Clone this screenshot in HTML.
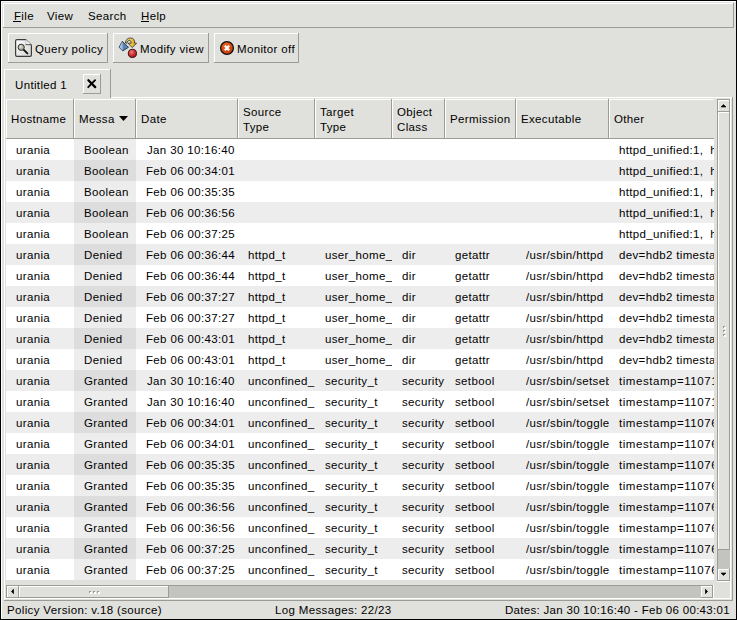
<!DOCTYPE html><html><head><meta charset="utf-8"><style>
html,body{margin:0;padding:0}
body{width:737px;height:620px;position:relative;overflow:hidden;background:#e0e0dc;font-family:"Liberation Sans",sans-serif;font-size:11.5px;letter-spacing:0.35px;color:#000}
.a{position:absolute}
.t{position:absolute;line-height:14px;white-space:nowrap}
</style></head><body>
<div class="a" style="left:0px;top:0px;width:737px;height:620px;background:#000;"></div>
<div class="a" style="left:1px;top:1px;width:735px;height:618px;background:#e0e0dc;"></div>
<div class="a" style="left:1px;top:1px;width:735px;height:1px;background:#ffffff;"></div>
<div class="a" style="left:1px;top:1px;width:1px;height:618px;background:#ffffff;"></div>
<div class="a" style="left:3px;top:3px;width:731px;height:1px;background:#ffffff;"></div>
<div class="a" style="left:3px;top:3px;width:1px;height:25px;background:#ffffff;"></div>
<div class="a" style="left:3px;top:27px;width:731px;height:1px;background:#9c9b94;"></div>
<div class="a" style="left:733px;top:3px;width:1px;height:25px;background:#9c9b94;"></div>
<div class="t" style="left:14px;top:9px;">File</div>
<div class="t" style="left:47px;top:9px;">View</div>
<div class="t" style="left:88px;top:9px;">Search</div>
<div class="t" style="left:141px;top:9px;">Help</div>
<div class="a" style="left:13px;top:21px;width:8px;height:1px;background:#000;"></div>
<div class="a" style="left:141px;top:21px;width:8px;height:1px;background:#000;"></div>
<div class="a" style="left:8px;top:33px;width:100px;height:1px;background:#ffffff;"></div>
<div class="a" style="left:8px;top:33px;width:1px;height:30px;background:#ffffff;"></div>
<div class="a" style="left:8px;top:62px;width:100px;height:1px;background:#9c9b94;"></div>
<div class="a" style="left:107px;top:33px;width:1px;height:30px;background:#9c9b94;"></div>
<div class="a" style="left:113px;top:33px;width:96px;height:1px;background:#ffffff;"></div>
<div class="a" style="left:113px;top:33px;width:1px;height:30px;background:#ffffff;"></div>
<div class="a" style="left:113px;top:62px;width:96px;height:1px;background:#9c9b94;"></div>
<div class="a" style="left:208px;top:33px;width:1px;height:30px;background:#9c9b94;"></div>
<div class="a" style="left:214px;top:33px;width:85px;height:1px;background:#ffffff;"></div>
<div class="a" style="left:214px;top:33px;width:1px;height:30px;background:#ffffff;"></div>
<div class="a" style="left:214px;top:62px;width:85px;height:1px;background:#9c9b94;"></div>
<div class="a" style="left:298px;top:33px;width:1px;height:30px;background:#9c9b94;"></div>
<div class="t" style="left:35px;top:42px;">Query policy</div>
<div class="t" style="left:140px;top:42px;">Modify view</div>
<div class="t" style="left:237px;top:42px;">Monitor off</div>
<div class="a" style="left:4px;top:69px;width:1px;height:532px;background:#ffffff;"></div>
<div class="a" style="left:4px;top:69px;width:107px;height:1px;background:#ffffff;"></div>
<div class="a" style="left:110px;top:69px;width:1px;height:29px;background:#9c9b94;"></div>
<div class="a" style="left:111px;top:97px;width:622px;height:1px;background:#ffffff;"></div>
<div class="a" style="left:732px;top:97px;width:1px;height:504px;background:#9c9b94;"></div>
<div class="a" style="left:4px;top:600px;width:729px;height:1px;background:#9c9b94;"></div>
<div class="t" style="left:15px;top:78px;">Untitled 1</div>
<div class="a" style="left:83px;top:74px;width:18px;height:1px;background:#ffffff;"></div>
<div class="a" style="left:83px;top:74px;width:1px;height:20px;background:#ffffff;"></div>
<div class="a" style="left:83px;top:93px;width:18px;height:1px;background:#9c9b94;"></div>
<div class="a" style="left:100px;top:74px;width:1px;height:20px;background:#9c9b94;"></div>
<div class="a" style="left:730px;top:98px;width:1px;height:501px;background:#ffffff;"></div>
<div class="a" style="left:5px;top:598px;width:726px;height:1px;background:#ffffff;"></div>
<div class="a" style="left:6px;top:99px;width:68px;height:1px;background:#ffffff;"></div>
<div class="a" style="left:6px;top:99px;width:1px;height:40px;background:#ffffff;"></div>
<div class="a" style="left:6px;top:138px;width:68px;height:1px;background:#9c9b94;"></div>
<div class="a" style="left:73px;top:99px;width:1px;height:40px;background:#9c9b94;"></div>
<div class="t" style="left:11px;top:112px;">Hostname</div>
<div class="a" style="left:74px;top:99px;width:62px;height:1px;background:#ffffff;"></div>
<div class="a" style="left:74px;top:99px;width:1px;height:40px;background:#ffffff;"></div>
<div class="a" style="left:74px;top:138px;width:62px;height:1px;background:#9c9b94;"></div>
<div class="a" style="left:135px;top:99px;width:1px;height:40px;background:#9c9b94;"></div>
<div class="t" style="left:79px;top:112px;">Messa</div>
<div class="a" style="left:136px;top:99px;width:102px;height:1px;background:#ffffff;"></div>
<div class="a" style="left:136px;top:99px;width:1px;height:40px;background:#ffffff;"></div>
<div class="a" style="left:136px;top:138px;width:102px;height:1px;background:#9c9b94;"></div>
<div class="a" style="left:237px;top:99px;width:1px;height:40px;background:#9c9b94;"></div>
<div class="t" style="left:141px;top:112px;">Date</div>
<div class="a" style="left:238px;top:99px;width:77px;height:1px;background:#ffffff;"></div>
<div class="a" style="left:238px;top:99px;width:1px;height:40px;background:#ffffff;"></div>
<div class="a" style="left:238px;top:138px;width:77px;height:1px;background:#9c9b94;"></div>
<div class="a" style="left:314px;top:99px;width:1px;height:40px;background:#9c9b94;"></div>
<div class="t" style="left:243px;top:105px;">Source</div>
<div class="t" style="left:243px;top:120px;">Type</div>
<div class="a" style="left:315px;top:99px;width:77px;height:1px;background:#ffffff;"></div>
<div class="a" style="left:315px;top:99px;width:1px;height:40px;background:#ffffff;"></div>
<div class="a" style="left:315px;top:138px;width:77px;height:1px;background:#9c9b94;"></div>
<div class="a" style="left:391px;top:99px;width:1px;height:40px;background:#9c9b94;"></div>
<div class="t" style="left:320px;top:105px;">Target</div>
<div class="t" style="left:320px;top:120px;">Type</div>
<div class="a" style="left:392px;top:99px;width:53px;height:1px;background:#ffffff;"></div>
<div class="a" style="left:392px;top:99px;width:1px;height:40px;background:#ffffff;"></div>
<div class="a" style="left:392px;top:138px;width:53px;height:1px;background:#9c9b94;"></div>
<div class="a" style="left:444px;top:99px;width:1px;height:40px;background:#9c9b94;"></div>
<div class="t" style="left:397px;top:105px;">Object</div>
<div class="t" style="left:397px;top:120px;">Class</div>
<div class="a" style="left:445px;top:99px;width:71px;height:1px;background:#ffffff;"></div>
<div class="a" style="left:445px;top:99px;width:1px;height:40px;background:#ffffff;"></div>
<div class="a" style="left:445px;top:138px;width:71px;height:1px;background:#9c9b94;"></div>
<div class="a" style="left:515px;top:99px;width:1px;height:40px;background:#9c9b94;"></div>
<div class="t" style="left:450px;top:112px;">Permission</div>
<div class="a" style="left:516px;top:99px;width:93px;height:1px;background:#ffffff;"></div>
<div class="a" style="left:516px;top:99px;width:1px;height:40px;background:#ffffff;"></div>
<div class="a" style="left:516px;top:138px;width:93px;height:1px;background:#9c9b94;"></div>
<div class="a" style="left:608px;top:99px;width:1px;height:40px;background:#9c9b94;"></div>
<div class="t" style="left:521px;top:112px;">Executable</div>
<div class="a" style="left:609px;top:99px;width:105px;height:1px;background:#ffffff;"></div>
<div class="a" style="left:609px;top:99px;width:1px;height:40px;background:#ffffff;"></div>
<div class="a" style="left:609px;top:138px;width:105px;height:1px;background:#9c9b94;"></div>
<div class="t" style="left:614px;top:112px;">Other</div>
<svg class="a" style="left:118px;top:115px" width="12" height="8"><polygon points="1,1 10,1 5.5,6" fill="#000"/></svg>
<div class="a" style="left:6px;top:139px;width:708px;height:21px;background:#ffffff;"></div>
<div class="a" style="left:74px;top:139px;width:62px;height:21px;background:#ededed;"></div>
<div class="t" style="left:16px;top:143px;width:58px;overflow:hidden">urania</div>
<div class="t" style="left:84px;top:143px;width:52px;overflow:hidden">Boolean</div>
<div class="t" style="left:147px;top:143px;width:91px;overflow:hidden">Jan 30 10:16:40</div>
<div class="t" style="left:619px;top:143px;width:95px;overflow:hidden">httpd_unified:1,&nbsp; httpd_builtin_scripting:1</div>
<div class="a" style="left:6px;top:160px;width:708px;height:21px;background:#ededed;"></div>
<div class="a" style="left:74px;top:160px;width:62px;height:21px;background:#dddddd;"></div>
<div class="t" style="left:16px;top:164px;width:58px;overflow:hidden">urania</div>
<div class="t" style="left:84px;top:164px;width:52px;overflow:hidden">Boolean</div>
<div class="t" style="left:146px;top:164px;width:92px;overflow:hidden">Feb 06 00:34:01</div>
<div class="t" style="left:619px;top:164px;width:95px;overflow:hidden">httpd_unified:1,&nbsp; httpd_builtin_scripting:1</div>
<div class="a" style="left:6px;top:181px;width:708px;height:21px;background:#ffffff;"></div>
<div class="a" style="left:74px;top:181px;width:62px;height:21px;background:#ededed;"></div>
<div class="t" style="left:16px;top:185px;width:58px;overflow:hidden">urania</div>
<div class="t" style="left:84px;top:185px;width:52px;overflow:hidden">Boolean</div>
<div class="t" style="left:146px;top:185px;width:92px;overflow:hidden">Feb 06 00:35:35</div>
<div class="t" style="left:619px;top:185px;width:95px;overflow:hidden">httpd_unified:1,&nbsp; httpd_builtin_scripting:1</div>
<div class="a" style="left:6px;top:202px;width:708px;height:21px;background:#ededed;"></div>
<div class="a" style="left:74px;top:202px;width:62px;height:21px;background:#dddddd;"></div>
<div class="t" style="left:16px;top:206px;width:58px;overflow:hidden">urania</div>
<div class="t" style="left:84px;top:206px;width:52px;overflow:hidden">Boolean</div>
<div class="t" style="left:146px;top:206px;width:92px;overflow:hidden">Feb 06 00:36:56</div>
<div class="t" style="left:619px;top:206px;width:95px;overflow:hidden">httpd_unified:1,&nbsp; httpd_builtin_scripting:1</div>
<div class="a" style="left:6px;top:223px;width:708px;height:21px;background:#ffffff;"></div>
<div class="a" style="left:74px;top:223px;width:62px;height:21px;background:#ededed;"></div>
<div class="t" style="left:16px;top:227px;width:58px;overflow:hidden">urania</div>
<div class="t" style="left:84px;top:227px;width:52px;overflow:hidden">Boolean</div>
<div class="t" style="left:146px;top:227px;width:92px;overflow:hidden">Feb 06 00:37:25</div>
<div class="t" style="left:619px;top:227px;width:95px;overflow:hidden">httpd_unified:1,&nbsp; httpd_builtin_scripting:1</div>
<div class="a" style="left:6px;top:244px;width:708px;height:21px;background:#ededed;"></div>
<div class="a" style="left:74px;top:244px;width:62px;height:21px;background:#dddddd;"></div>
<div class="t" style="left:16px;top:248px;width:58px;overflow:hidden">urania</div>
<div class="t" style="left:84px;top:248px;width:52px;overflow:hidden">Denied</div>
<div class="t" style="left:146px;top:248px;width:92px;overflow:hidden">Feb 06 00:36:44</div>
<div class="t" style="left:248px;top:248px;width:67px;overflow:hidden">httpd_t</div>
<div class="t" style="left:325px;top:248px;width:67px;overflow:hidden">user_home_</div>
<div class="t" style="left:402px;top:248px;width:43px;overflow:hidden">dir</div>
<div class="t" style="left:455px;top:248px;width:61px;overflow:hidden">getattr</div>
<div class="t" style="left:526px;top:248px;width:83px;overflow:hidden">/usr/sbin/httpd</div>
<div class="t" style="left:619px;top:248px;width:95px;overflow:hidden">dev=hdb2 timestamp=1107</div>
<div class="a" style="left:6px;top:265px;width:708px;height:21px;background:#ffffff;"></div>
<div class="a" style="left:74px;top:265px;width:62px;height:21px;background:#ededed;"></div>
<div class="t" style="left:16px;top:269px;width:58px;overflow:hidden">urania</div>
<div class="t" style="left:84px;top:269px;width:52px;overflow:hidden">Denied</div>
<div class="t" style="left:146px;top:269px;width:92px;overflow:hidden">Feb 06 00:36:44</div>
<div class="t" style="left:248px;top:269px;width:67px;overflow:hidden">httpd_t</div>
<div class="t" style="left:325px;top:269px;width:67px;overflow:hidden">user_home_</div>
<div class="t" style="left:402px;top:269px;width:43px;overflow:hidden">dir</div>
<div class="t" style="left:455px;top:269px;width:61px;overflow:hidden">getattr</div>
<div class="t" style="left:526px;top:269px;width:83px;overflow:hidden">/usr/sbin/httpd</div>
<div class="t" style="left:619px;top:269px;width:95px;overflow:hidden">dev=hdb2 timestamp=1107</div>
<div class="a" style="left:6px;top:286px;width:708px;height:21px;background:#ededed;"></div>
<div class="a" style="left:74px;top:286px;width:62px;height:21px;background:#dddddd;"></div>
<div class="t" style="left:16px;top:290px;width:58px;overflow:hidden">urania</div>
<div class="t" style="left:84px;top:290px;width:52px;overflow:hidden">Denied</div>
<div class="t" style="left:146px;top:290px;width:92px;overflow:hidden">Feb 06 00:37:27</div>
<div class="t" style="left:248px;top:290px;width:67px;overflow:hidden">httpd_t</div>
<div class="t" style="left:325px;top:290px;width:67px;overflow:hidden">user_home_</div>
<div class="t" style="left:402px;top:290px;width:43px;overflow:hidden">dir</div>
<div class="t" style="left:455px;top:290px;width:61px;overflow:hidden">getattr</div>
<div class="t" style="left:526px;top:290px;width:83px;overflow:hidden">/usr/sbin/httpd</div>
<div class="t" style="left:619px;top:290px;width:95px;overflow:hidden">dev=hdb2 timestamp=1107</div>
<div class="a" style="left:6px;top:307px;width:708px;height:21px;background:#ffffff;"></div>
<div class="a" style="left:74px;top:307px;width:62px;height:21px;background:#ededed;"></div>
<div class="t" style="left:16px;top:311px;width:58px;overflow:hidden">urania</div>
<div class="t" style="left:84px;top:311px;width:52px;overflow:hidden">Denied</div>
<div class="t" style="left:146px;top:311px;width:92px;overflow:hidden">Feb 06 00:37:27</div>
<div class="t" style="left:248px;top:311px;width:67px;overflow:hidden">httpd_t</div>
<div class="t" style="left:325px;top:311px;width:67px;overflow:hidden">user_home_</div>
<div class="t" style="left:402px;top:311px;width:43px;overflow:hidden">dir</div>
<div class="t" style="left:455px;top:311px;width:61px;overflow:hidden">getattr</div>
<div class="t" style="left:526px;top:311px;width:83px;overflow:hidden">/usr/sbin/httpd</div>
<div class="t" style="left:619px;top:311px;width:95px;overflow:hidden">dev=hdb2 timestamp=1107</div>
<div class="a" style="left:6px;top:328px;width:708px;height:21px;background:#ededed;"></div>
<div class="a" style="left:74px;top:328px;width:62px;height:21px;background:#dddddd;"></div>
<div class="t" style="left:16px;top:332px;width:58px;overflow:hidden">urania</div>
<div class="t" style="left:84px;top:332px;width:52px;overflow:hidden">Denied</div>
<div class="t" style="left:146px;top:332px;width:92px;overflow:hidden">Feb 06 00:43:01</div>
<div class="t" style="left:248px;top:332px;width:67px;overflow:hidden">httpd_t</div>
<div class="t" style="left:325px;top:332px;width:67px;overflow:hidden">user_home_</div>
<div class="t" style="left:402px;top:332px;width:43px;overflow:hidden">dir</div>
<div class="t" style="left:455px;top:332px;width:61px;overflow:hidden">getattr</div>
<div class="t" style="left:526px;top:332px;width:83px;overflow:hidden">/usr/sbin/httpd</div>
<div class="t" style="left:619px;top:332px;width:95px;overflow:hidden">dev=hdb2 timestamp=1107</div>
<div class="a" style="left:6px;top:349px;width:708px;height:21px;background:#ffffff;"></div>
<div class="a" style="left:74px;top:349px;width:62px;height:21px;background:#ededed;"></div>
<div class="t" style="left:16px;top:353px;width:58px;overflow:hidden">urania</div>
<div class="t" style="left:84px;top:353px;width:52px;overflow:hidden">Denied</div>
<div class="t" style="left:146px;top:353px;width:92px;overflow:hidden">Feb 06 00:43:01</div>
<div class="t" style="left:248px;top:353px;width:67px;overflow:hidden">httpd_t</div>
<div class="t" style="left:325px;top:353px;width:67px;overflow:hidden">user_home_</div>
<div class="t" style="left:402px;top:353px;width:43px;overflow:hidden">dir</div>
<div class="t" style="left:455px;top:353px;width:61px;overflow:hidden">getattr</div>
<div class="t" style="left:526px;top:353px;width:83px;overflow:hidden">/usr/sbin/httpd</div>
<div class="t" style="left:619px;top:353px;width:95px;overflow:hidden">dev=hdb2 timestamp=1107</div>
<div class="a" style="left:6px;top:370px;width:708px;height:21px;background:#ededed;"></div>
<div class="a" style="left:74px;top:370px;width:62px;height:21px;background:#dddddd;"></div>
<div class="t" style="left:16px;top:374px;width:58px;overflow:hidden">urania</div>
<div class="t" style="left:84px;top:374px;width:52px;overflow:hidden">Granted</div>
<div class="t" style="left:147px;top:374px;width:91px;overflow:hidden">Jan 30 10:16:40</div>
<div class="t" style="left:248px;top:374px;width:67px;overflow:hidden">unconfined_</div>
<div class="t" style="left:325px;top:374px;width:67px;overflow:hidden">security_t</div>
<div class="t" style="left:402px;top:374px;width:43px;overflow:hidden">security</div>
<div class="t" style="left:455px;top:374px;width:61px;overflow:hidden">setbool</div>
<div class="t" style="left:526px;top:374px;width:83px;overflow:hidden">/usr/sbin/setsebool</div>
<div class="t" style="left:619px;top:374px;width:95px;overflow:hidden;letter-spacing:0.55px">timestamp=1107115</div>
<div class="a" style="left:6px;top:391px;width:708px;height:21px;background:#ffffff;"></div>
<div class="a" style="left:74px;top:391px;width:62px;height:21px;background:#ededed;"></div>
<div class="t" style="left:16px;top:395px;width:58px;overflow:hidden">urania</div>
<div class="t" style="left:84px;top:395px;width:52px;overflow:hidden">Granted</div>
<div class="t" style="left:147px;top:395px;width:91px;overflow:hidden">Jan 30 10:16:40</div>
<div class="t" style="left:248px;top:395px;width:67px;overflow:hidden">unconfined_</div>
<div class="t" style="left:325px;top:395px;width:67px;overflow:hidden">security_t</div>
<div class="t" style="left:402px;top:395px;width:43px;overflow:hidden">security</div>
<div class="t" style="left:455px;top:395px;width:61px;overflow:hidden">setbool</div>
<div class="t" style="left:526px;top:395px;width:83px;overflow:hidden">/usr/sbin/setsebool</div>
<div class="t" style="left:619px;top:395px;width:95px;overflow:hidden;letter-spacing:0.55px">timestamp=1107115</div>
<div class="a" style="left:6px;top:412px;width:708px;height:21px;background:#ededed;"></div>
<div class="a" style="left:74px;top:412px;width:62px;height:21px;background:#dddddd;"></div>
<div class="t" style="left:16px;top:416px;width:58px;overflow:hidden">urania</div>
<div class="t" style="left:84px;top:416px;width:52px;overflow:hidden">Granted</div>
<div class="t" style="left:146px;top:416px;width:92px;overflow:hidden">Feb 06 00:34:01</div>
<div class="t" style="left:248px;top:416px;width:67px;overflow:hidden">unconfined_</div>
<div class="t" style="left:325px;top:416px;width:67px;overflow:hidden">security_t</div>
<div class="t" style="left:402px;top:416px;width:43px;overflow:hidden">security</div>
<div class="t" style="left:455px;top:416px;width:61px;overflow:hidden">setbool</div>
<div class="t" style="left:526px;top:416px;width:83px;overflow:hidden">/usr/sbin/togglesebool</div>
<div class="t" style="left:619px;top:416px;width:95px;overflow:hidden;letter-spacing:0.55px">timestamp=1107672</div>
<div class="a" style="left:6px;top:433px;width:708px;height:21px;background:#ffffff;"></div>
<div class="a" style="left:74px;top:433px;width:62px;height:21px;background:#ededed;"></div>
<div class="t" style="left:16px;top:437px;width:58px;overflow:hidden">urania</div>
<div class="t" style="left:84px;top:437px;width:52px;overflow:hidden">Granted</div>
<div class="t" style="left:146px;top:437px;width:92px;overflow:hidden">Feb 06 00:34:01</div>
<div class="t" style="left:248px;top:437px;width:67px;overflow:hidden">unconfined_</div>
<div class="t" style="left:325px;top:437px;width:67px;overflow:hidden">security_t</div>
<div class="t" style="left:402px;top:437px;width:43px;overflow:hidden">security</div>
<div class="t" style="left:455px;top:437px;width:61px;overflow:hidden">setbool</div>
<div class="t" style="left:526px;top:437px;width:83px;overflow:hidden">/usr/sbin/togglesebool</div>
<div class="t" style="left:619px;top:437px;width:95px;overflow:hidden;letter-spacing:0.55px">timestamp=1107672</div>
<div class="a" style="left:6px;top:454px;width:708px;height:21px;background:#ededed;"></div>
<div class="a" style="left:74px;top:454px;width:62px;height:21px;background:#dddddd;"></div>
<div class="t" style="left:16px;top:458px;width:58px;overflow:hidden">urania</div>
<div class="t" style="left:84px;top:458px;width:52px;overflow:hidden">Granted</div>
<div class="t" style="left:146px;top:458px;width:92px;overflow:hidden">Feb 06 00:35:35</div>
<div class="t" style="left:248px;top:458px;width:67px;overflow:hidden">unconfined_</div>
<div class="t" style="left:325px;top:458px;width:67px;overflow:hidden">security_t</div>
<div class="t" style="left:402px;top:458px;width:43px;overflow:hidden">security</div>
<div class="t" style="left:455px;top:458px;width:61px;overflow:hidden">setbool</div>
<div class="t" style="left:526px;top:458px;width:83px;overflow:hidden">/usr/sbin/togglesebool</div>
<div class="t" style="left:619px;top:458px;width:95px;overflow:hidden;letter-spacing:0.55px">timestamp=1107672</div>
<div class="a" style="left:6px;top:475px;width:708px;height:21px;background:#ffffff;"></div>
<div class="a" style="left:74px;top:475px;width:62px;height:21px;background:#ededed;"></div>
<div class="t" style="left:16px;top:479px;width:58px;overflow:hidden">urania</div>
<div class="t" style="left:84px;top:479px;width:52px;overflow:hidden">Granted</div>
<div class="t" style="left:146px;top:479px;width:92px;overflow:hidden">Feb 06 00:35:35</div>
<div class="t" style="left:248px;top:479px;width:67px;overflow:hidden">unconfined_</div>
<div class="t" style="left:325px;top:479px;width:67px;overflow:hidden">security_t</div>
<div class="t" style="left:402px;top:479px;width:43px;overflow:hidden">security</div>
<div class="t" style="left:455px;top:479px;width:61px;overflow:hidden">setbool</div>
<div class="t" style="left:526px;top:479px;width:83px;overflow:hidden">/usr/sbin/togglesebool</div>
<div class="t" style="left:619px;top:479px;width:95px;overflow:hidden;letter-spacing:0.55px">timestamp=1107672</div>
<div class="a" style="left:6px;top:496px;width:708px;height:21px;background:#ededed;"></div>
<div class="a" style="left:74px;top:496px;width:62px;height:21px;background:#dddddd;"></div>
<div class="t" style="left:16px;top:500px;width:58px;overflow:hidden">urania</div>
<div class="t" style="left:84px;top:500px;width:52px;overflow:hidden">Granted</div>
<div class="t" style="left:146px;top:500px;width:92px;overflow:hidden">Feb 06 00:36:56</div>
<div class="t" style="left:248px;top:500px;width:67px;overflow:hidden">unconfined_</div>
<div class="t" style="left:325px;top:500px;width:67px;overflow:hidden">security_t</div>
<div class="t" style="left:402px;top:500px;width:43px;overflow:hidden">security</div>
<div class="t" style="left:455px;top:500px;width:61px;overflow:hidden">setbool</div>
<div class="t" style="left:526px;top:500px;width:83px;overflow:hidden">/usr/sbin/togglesebool</div>
<div class="t" style="left:619px;top:500px;width:95px;overflow:hidden;letter-spacing:0.55px">timestamp=1107672</div>
<div class="a" style="left:6px;top:517px;width:708px;height:21px;background:#ffffff;"></div>
<div class="a" style="left:74px;top:517px;width:62px;height:21px;background:#ededed;"></div>
<div class="t" style="left:16px;top:521px;width:58px;overflow:hidden">urania</div>
<div class="t" style="left:84px;top:521px;width:52px;overflow:hidden">Granted</div>
<div class="t" style="left:146px;top:521px;width:92px;overflow:hidden">Feb 06 00:36:56</div>
<div class="t" style="left:248px;top:521px;width:67px;overflow:hidden">unconfined_</div>
<div class="t" style="left:325px;top:521px;width:67px;overflow:hidden">security_t</div>
<div class="t" style="left:402px;top:521px;width:43px;overflow:hidden">security</div>
<div class="t" style="left:455px;top:521px;width:61px;overflow:hidden">setbool</div>
<div class="t" style="left:526px;top:521px;width:83px;overflow:hidden">/usr/sbin/togglesebool</div>
<div class="t" style="left:619px;top:521px;width:95px;overflow:hidden;letter-spacing:0.55px">timestamp=1107672</div>
<div class="a" style="left:6px;top:538px;width:708px;height:21px;background:#ededed;"></div>
<div class="a" style="left:74px;top:538px;width:62px;height:21px;background:#dddddd;"></div>
<div class="t" style="left:16px;top:542px;width:58px;overflow:hidden">urania</div>
<div class="t" style="left:84px;top:542px;width:52px;overflow:hidden">Granted</div>
<div class="t" style="left:146px;top:542px;width:92px;overflow:hidden">Feb 06 00:37:25</div>
<div class="t" style="left:248px;top:542px;width:67px;overflow:hidden">unconfined_</div>
<div class="t" style="left:325px;top:542px;width:67px;overflow:hidden">security_t</div>
<div class="t" style="left:402px;top:542px;width:43px;overflow:hidden">security</div>
<div class="t" style="left:455px;top:542px;width:61px;overflow:hidden">setbool</div>
<div class="t" style="left:526px;top:542px;width:83px;overflow:hidden">/usr/sbin/togglesebool</div>
<div class="t" style="left:619px;top:542px;width:95px;overflow:hidden;letter-spacing:0.55px">timestamp=1107672</div>
<div class="a" style="left:6px;top:559px;width:708px;height:21px;background:#ffffff;"></div>
<div class="a" style="left:74px;top:559px;width:62px;height:21px;background:#ededed;"></div>
<div class="t" style="left:16px;top:563px;width:58px;overflow:hidden">urania</div>
<div class="t" style="left:84px;top:563px;width:52px;overflow:hidden">Granted</div>
<div class="t" style="left:146px;top:563px;width:92px;overflow:hidden">Feb 06 00:37:25</div>
<div class="t" style="left:248px;top:563px;width:67px;overflow:hidden">unconfined_</div>
<div class="t" style="left:325px;top:563px;width:67px;overflow:hidden">security_t</div>
<div class="t" style="left:402px;top:563px;width:43px;overflow:hidden">security</div>
<div class="t" style="left:455px;top:563px;width:61px;overflow:hidden">setbool</div>
<div class="t" style="left:526px;top:563px;width:83px;overflow:hidden">/usr/sbin/togglesebool</div>
<div class="t" style="left:619px;top:563px;width:95px;overflow:hidden;letter-spacing:0.55px">timestamp=1107672</div>
<div class="a" style="left:717px;top:99px;width:14px;height:483px;background:#c3c4bf;"></div>
<div class="a" style="left:717px;top:99px;width:14px;height:1px;background:#9c9b94;"></div>
<div class="a" style="left:717px;top:99px;width:1px;height:483px;background:#9c9b94;"></div>
<div class="a" style="left:717px;top:581px;width:14px;height:1px;background:#ffffff;"></div>
<div class="a" style="left:730px;top:99px;width:1px;height:483px;background:#ffffff;"></div>
<div class="a" style="left:718px;top:100px;width:12px;height:12px;background:#e0e0dc;"></div>
<div class="a" style="left:718px;top:100px;width:12px;height:1px;background:#ffffff;"></div>
<div class="a" style="left:718px;top:100px;width:1px;height:12px;background:#ffffff;"></div>
<div class="a" style="left:718px;top:111px;width:12px;height:1px;background:#9c9b94;"></div>
<div class="a" style="left:729px;top:100px;width:1px;height:12px;background:#9c9b94;"></div>
<div class="a" style="left:718px;top:112px;width:12px;height:438px;background:#e0e0dc;"></div>
<div class="a" style="left:718px;top:112px;width:12px;height:1px;background:#ffffff;"></div>
<div class="a" style="left:718px;top:112px;width:1px;height:438px;background:#ffffff;"></div>
<div class="a" style="left:718px;top:549px;width:12px;height:1px;background:#9c9b94;"></div>
<div class="a" style="left:729px;top:112px;width:1px;height:438px;background:#9c9b94;"></div>
<div class="a" style="left:718px;top:569px;width:12px;height:12px;background:#e0e0dc;"></div>
<div class="a" style="left:718px;top:569px;width:12px;height:1px;background:#ffffff;"></div>
<div class="a" style="left:718px;top:569px;width:1px;height:12px;background:#ffffff;"></div>
<div class="a" style="left:718px;top:580px;width:12px;height:1px;background:#9c9b94;"></div>
<div class="a" style="left:729px;top:569px;width:1px;height:12px;background:#9c9b94;"></div>
<svg class="a" style="left:718px;top:100px" width="12" height="12"><polygon points="3,7 8,7 5.5,4.5" fill="#000" stroke="#000" stroke-width="0.6"/></svg>
<svg class="a" style="left:718px;top:569px" width="12" height="12"><polygon points="3,4 8,4 5.5,6.5" fill="#000" stroke="#000" stroke-width="0.6"/></svg>
<div class="a" style="left:6px;top:585px;width:708px;height:14px;background:#c3c4bf;"></div>
<div class="a" style="left:6px;top:585px;width:708px;height:1px;background:#9c9b94;"></div>
<div class="a" style="left:6px;top:585px;width:1px;height:14px;background:#9c9b94;"></div>
<div class="a" style="left:6px;top:598px;width:708px;height:1px;background:#ffffff;"></div>
<div class="a" style="left:713px;top:585px;width:1px;height:14px;background:#ffffff;"></div>
<div class="a" style="left:7px;top:586px;width:12px;height:12px;background:#e0e0dc;"></div>
<div class="a" style="left:7px;top:586px;width:12px;height:1px;background:#ffffff;"></div>
<div class="a" style="left:7px;top:586px;width:1px;height:12px;background:#ffffff;"></div>
<div class="a" style="left:7px;top:597px;width:12px;height:1px;background:#9c9b94;"></div>
<div class="a" style="left:18px;top:586px;width:1px;height:12px;background:#9c9b94;"></div>
<div class="a" style="left:19px;top:586px;width:150px;height:12px;background:#e0e0dc;"></div>
<div class="a" style="left:19px;top:586px;width:150px;height:1px;background:#ffffff;"></div>
<div class="a" style="left:19px;top:586px;width:1px;height:12px;background:#ffffff;"></div>
<div class="a" style="left:19px;top:597px;width:150px;height:1px;background:#9c9b94;"></div>
<div class="a" style="left:168px;top:586px;width:1px;height:12px;background:#9c9b94;"></div>
<div class="a" style="left:701px;top:586px;width:12px;height:12px;background:#e0e0dc;"></div>
<div class="a" style="left:701px;top:586px;width:12px;height:1px;background:#ffffff;"></div>
<div class="a" style="left:701px;top:586px;width:1px;height:12px;background:#ffffff;"></div>
<div class="a" style="left:701px;top:597px;width:12px;height:1px;background:#9c9b94;"></div>
<div class="a" style="left:712px;top:586px;width:1px;height:12px;background:#9c9b94;"></div>
<svg class="a" style="left:7px;top:586px" width="12" height="12"><polygon points="4.5,5.5 6.5,3.3 6.5,7.7" fill="#000" stroke="#000" stroke-width="0.7"/></svg>
<svg class="a" style="left:701px;top:586px" width="12" height="12"><polygon points="6.5,5.5 4.5,3.3 4.5,7.7" fill="#000" stroke="#000" stroke-width="0.7"/></svg>
<div class="a" style="left:90px;top:592px;width:2px;height:2px;background:#ffffff;"></div>
<div class="a" style="left:89px;top:591px;width:2px;height:1px;background:#9c9b94;"></div>
<div class="a" style="left:89px;top:592px;width:1px;height:1px;background:#9c9b94;"></div>
<div class="a" style="left:94px;top:592px;width:2px;height:2px;background:#ffffff;"></div>
<div class="a" style="left:93px;top:591px;width:2px;height:1px;background:#9c9b94;"></div>
<div class="a" style="left:93px;top:592px;width:1px;height:1px;background:#9c9b94;"></div>
<div class="a" style="left:98px;top:592px;width:2px;height:2px;background:#ffffff;"></div>
<div class="a" style="left:97px;top:591px;width:2px;height:1px;background:#9c9b94;"></div>
<div class="a" style="left:97px;top:592px;width:1px;height:1px;background:#9c9b94;"></div>
<div class="a" style="left:724px;top:327px;width:2px;height:2px;background:#ffffff;"></div>
<div class="a" style="left:723px;top:326px;width:2px;height:1px;background:#9c9b94;"></div>
<div class="a" style="left:723px;top:327px;width:1px;height:1px;background:#9c9b94;"></div>
<div class="a" style="left:724px;top:331px;width:2px;height:2px;background:#ffffff;"></div>
<div class="a" style="left:723px;top:330px;width:2px;height:1px;background:#9c9b94;"></div>
<div class="a" style="left:723px;top:331px;width:1px;height:1px;background:#9c9b94;"></div>
<div class="a" style="left:724px;top:335px;width:2px;height:2px;background:#ffffff;"></div>
<div class="a" style="left:723px;top:334px;width:2px;height:1px;background:#9c9b94;"></div>
<div class="a" style="left:723px;top:335px;width:1px;height:1px;background:#9c9b94;"></div>
<div class="t" style="left:7px;top:603px;">Policy Version: v.18 (source)</div>
<div class="t" style="left:275px;top:603px;">Log Messages: 22/23</div>
<div class="t" style="left:505px;top:603px;letter-spacing:0.3px">Dates: Jan 30 10:16:40 - Feb 06 00:43:01</div>
<svg class="a" style="left:13px;top:37px" width="20" height="22" viewBox="0 0 20 22">
<defs><linearGradient id="pg" x1="0" y1="0" x2="1" y2="1"><stop offset="0" stop-color="#ffffff"/><stop offset="1" stop-color="#d4d4d2"/></linearGradient>
<radialGradient id="lg" cx="0.4" cy="0.4" r="0.6"><stop offset="0" stop-color="#e6e8d8"/><stop offset="1" stop-color="#9a9c88"/></radialGradient></defs>
<path d="M4,2.6 H12.8 L18.4,8.2 V18 Q18.4,19.4 17,19.4 H4 Q2.6,19.4 2.6,18 V4 Q2.6,2.6 4,2.6 Z" fill="url(#pg)" stroke="#3c3c3c" stroke-width="1.2" stroke-linejoin="round"/>
<path d="M12.9,2.7 L18.3,8.1" stroke="#c4c4c4" stroke-width="1.1"/>
<path d="M12.8,3.2 V7.6 H17.8 Z" fill="#f2f2f2"/>
<path d="M12.8,3.2 V7.6" stroke="#b8b8b8" stroke-width="0.8"/>
<path d="M12.6,7.7 H18.4" stroke="#4a4a4a" stroke-width="1"/>
<line x1="10.6" y1="12.6" x2="14.4" y2="16.4" stroke="#111" stroke-width="1.9" stroke-linecap="round"/>
<circle cx="8.2" cy="10.3" r="3.1" fill="url(#lg)" stroke="#333" stroke-width="1"/>
</svg>
<svg class="a" style="left:117px;top:36px" width="22" height="22" viewBox="0 0 22 22">
<defs><radialGradient id="rb" cx="0.4" cy="0.35" r="0.65"><stop offset="0" stop-color="#ee8080"/><stop offset="0.5" stop-color="#d43a3a"/><stop offset="1" stop-color="#a01818"/></radialGradient>
<linearGradient id="ar" x1="0" y1="0" x2="1" y2="0"><stop offset="0" stop-color="#d8d0b0"/><stop offset="0.5" stop-color="#ecc850"/><stop offset="1" stop-color="#d8a018"/></linearGradient>
<linearGradient id="py" x1="0" y1="0" x2="1" y2="0"><stop offset="0" stop-color="#a8c6e6"/><stop offset="1" stop-color="#5c86b2"/></linearGradient></defs>
<path d="M8.4,7 C8.6,3.6 10.8,2 13.6,2 C16.3,2 17.7,3.8 17.7,7.2 L19.5,7.2 L15.2,11.6 L11,7.2 L14.2,7.2 C14.2,5.4 13.5,4.4 12.3,4.4 C11.1,4.4 10.2,5.3 10,7.2 Z" fill="url(#ar)" stroke="#1a1608" stroke-width="0.7" stroke-linejoin="round"/>
<path d="M5.3,5.3 L2.1,11.3 L5.8,14.9 L11.5,11.3 Z" fill="#5a82ae" stroke="#26384c" stroke-width="0.9" stroke-linejoin="round"/>
<path d="M5.3,5.6 L2.5,11.3 L5.8,14.4 Z" fill="#a4c2e2"/>
<circle cx="15.4" cy="17.4" r="4.1" fill="url(#rb)" stroke="#2a0808" stroke-width="0.9"/>
</svg>
<svg class="a" style="left:219px;top:40px" width="16" height="16" viewBox="0 0 16 16">
<defs><radialGradient id="oc" cx="0.4" cy="0.3" r="0.7"><stop offset="0" stop-color="#ee6420"/><stop offset="1" stop-color="#c63c0c"/></radialGradient></defs>
<circle cx="8" cy="8" r="6.4" fill="url(#oc)" stroke="#111" stroke-width="1.3"/>
<path d="M5.8,5.8 L10.2,10.2 M10.2,5.8 L5.8,10.2" stroke="#fff" stroke-width="2.2"/>
</svg>
<svg class="a" style="left:84px;top:75px" width="16" height="18" viewBox="0 0 16 18">
<path d="M4.4,5.3 L11.2,12.1" stroke="#000" stroke-width="2.3" stroke-linecap="round"/>
<path d="M11.1,5.2 L4.2,12.2" stroke="#000" stroke-width="1.8" stroke-linecap="round"/>
</svg>
</body></html>
